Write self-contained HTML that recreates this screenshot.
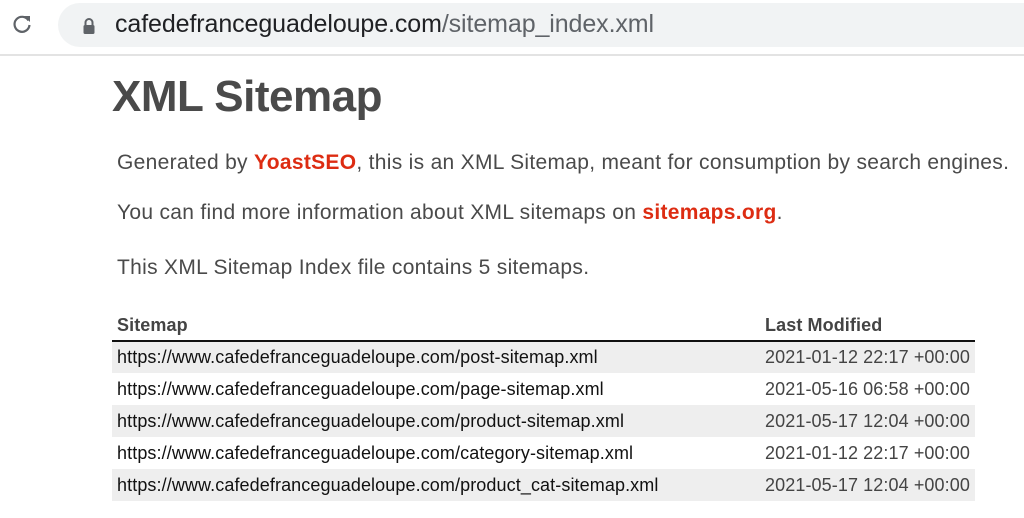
<!DOCTYPE html>
<html><head><meta charset="utf-8"><style>
*{margin:0;padding:0;box-sizing:border-box}
body{width:1024px;height:518px;overflow:hidden;background:#fff;font-family:"Liberation Sans",Arial,sans-serif;position:relative;color:#444}
.bar{position:absolute;left:0;top:0;width:1024px;height:56px;background:#fff;border-bottom:2px solid #e3e3e3}
.pill{position:absolute;left:58px;top:3px;width:1000px;height:44px;border-radius:22px;background:#f1f3f4}
.url{position:absolute;left:115px;top:10px;font-size:25px;color:#202124;letter-spacing:-0.1px}
.url span{color:#5f6368}
h1{position:absolute;left:112px;top:72px;font-size:44px;font-weight:bold;color:#4a4a4a;letter-spacing:-0.5px}
p{position:absolute;left:117px;font-size:21px;letter-spacing:0.3px;color:#4a4a4a}
p b{color:#dd2c12}
table{position:absolute;left:112px;top:310px;width:863px;border-collapse:collapse;font-size:18px;letter-spacing:0.1px}
th{text-align:left;font-weight:bold;color:#444;height:31px;border-bottom:2px solid #111;padding-left:5px;font-size:18px}
td{height:32px;padding-left:5px;color:#111}
td+td{color:#444}
tr:nth-child(even) td{background:#eee}
</style></head><body>
<div class="bar"><div class="pill"></div>
<svg style="position:absolute;left:10px;top:12px" width="24" height="24" viewBox="0 0 24 24"><path d="M18.5 8.5A7.5 7.5 0 1 0 19.5 13" fill="none" stroke="#5f6368" stroke-width="2.2"/><path d="M14 4h6v6z" fill="#5f6368"/></svg>
<svg style="position:absolute;left:82px;top:17px" width="14" height="18" viewBox="0 0 14 18"><path d="M3.5 8V5.5a3.5 3.5 0 0 1 7 0V8" fill="none" stroke="#5f6368" stroke-width="2"/><rect x="1.5" y="8" width="11" height="9" rx="1.5" fill="#5f6368"/></svg>
<div class="url">cafedefranceguadeloupe.com<span>/sitemap_index.xml</span></div></div>
<h1>XML Sitemap</h1>
<p style="top:151px">Generated by <b>YoastSEO</b>, this is an XML Sitemap, meant for consumption by search engines.</p>
<p style="top:201px">You can find more information about XML sitemaps on <b>sitemaps.org</b>.</p>
<p style="top:256px">This XML Sitemap Index file contains 5 sitemaps.</p>
<table>
<tr><th>Sitemap</th><th style="width:215px">Last Modified</th></tr>
<tr><td>https://www.cafedefranceguadeloupe.com/post-sitemap.xml</td><td>2021-01-12 22:17 +00:00</td></tr>
<tr><td>https://www.cafedefranceguadeloupe.com/page-sitemap.xml</td><td>2021-05-16 06:58 +00:00</td></tr>
<tr><td>https://www.cafedefranceguadeloupe.com/product-sitemap.xml</td><td>2021-05-17 12:04 +00:00</td></tr>
<tr><td>https://www.cafedefranceguadeloupe.com/category-sitemap.xml</td><td>2021-01-12 22:17 +00:00</td></tr>
<tr><td>https://www.cafedefranceguadeloupe.com/product_cat-sitemap.xml</td><td>2021-05-17 12:04 +00:00</td></tr>
</table>
</body></html>
